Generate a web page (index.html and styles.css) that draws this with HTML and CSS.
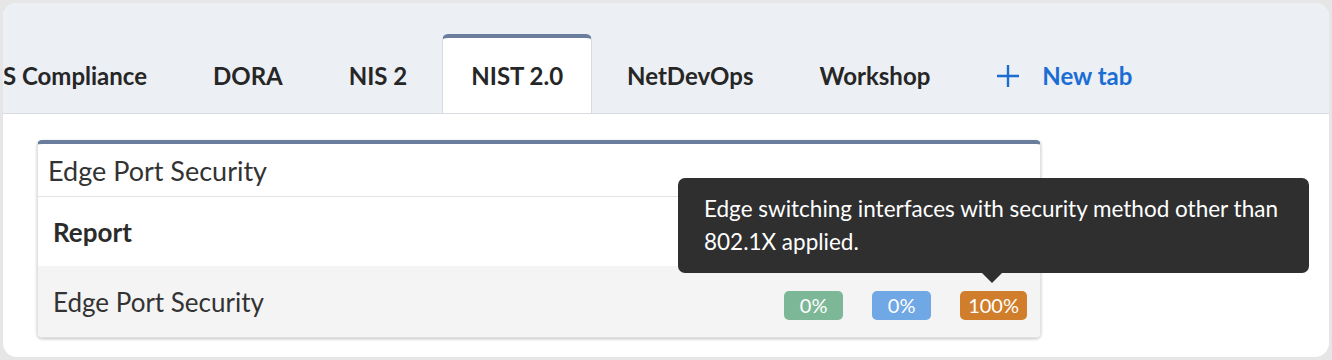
FILE: index.html
```html
<!DOCTYPE html>
<html lang="en">
<head>
  <meta charset="UTF-8" />
  <title>NIST 2.0</title>
  <link rel="stylesheet" href="styles.css">
</head>
<body>

  <div class="frame">
    <!-- Tab bar -->
    <nav class="tabbar">
      <div class="tab tab-first"><span>PCI DSS Compliance</span></div>
      <div class="tab">DORA</div>
      <div class="tab">NIS 2</div>
      <div class="tab active">NIST 2.0</div>
      <div class="tab">NetDevOps</div>
      <div class="tab">Workshop</div>
      <div class="tab new-tab">
        <svg width="24" height="24" viewBox="0 0 24 24"><path d="M12 1v22M1 12h22" stroke="#1a6dd3" stroke-width="2.4" fill="none"/></svg>
        <span>New tab</span>
      </div>
    </nav>

    <!-- Content -->
    <section class="content">
      <div class="card">
        <div class="card-title">Edge Port Security</div>
        <div class="card-head">Report</div>
        <div class="card-row">
          <span class="row-name">Edge Port Security</span>
          <div class="badges">
            <span class="badge green">0%</span>
            <span class="badge blue">0%</span>
            <span class="badge orange">100%</span>
          </div>
        </div>
      </div>

      <div class="tooltip">Edge switching interfaces with security method other than 802.1X applied.</div>
    </section>
  </div>

</body>
</html>
```

FILE: styles.css
```css
body {
  margin: 0;
  background-color: #e6e6e6;
  font-family: 'Lato', 'Open Sans', sans-serif;
  color: #2b2b2b;
}

.frame {
  margin: 3px;
  height: 354px;
  background: #fff;
  border-radius: 14px;
  overflow: hidden;
}

.tabbar {
  height: 110px;
  background: #eceff3;
  border-bottom: 1px solid #d8dbdf;
  display: flex;
  align-items: flex-end;
  gap: 4px;
  overflow: hidden;
}

.tab {
  height: 80px;
  margin-bottom: -1px;
  padding: 0 30px;
  display: flex;
  align-items: center;
  flex-shrink: 0;
  font-size: 24px;
  font-weight: bold;
  color: #262626;
  box-sizing: border-box;
  border: 1px solid transparent;
  border-top: 4px solid transparent;
  white-space: nowrap;
}

/* scrolled out of view on the left */
.tab-first {
  width: 175px;
  justify-content: flex-end;
  overflow: hidden;
}

.tab.active {
  background: #fff;
  border-color: #d8dbdf;
  border-top-color: #6a7d9c;
  border-bottom-color: #fff;
  border-radius: 6px 6px 0 0;
  padding: 0 28px;
}

.new-tab {
  color: #1a6dd3;
  gap: 22px;
}

.content {
  position: relative;
  padding: 26px 34px;
}

.card {
  width: 1004px;
  box-sizing: border-box;
  border: 1px solid #e2e2e2;
  border-top: 4px solid #6a7d9c;
  border-radius: 5px;
  box-shadow: 0 1px 3px rgba(0, 0, 0, 0.25);
  overflow: hidden;
}

.card-title {
  height: 52px;
  padding-left: 10px;
  display: flex;
  align-items: center;
  font-size: 27px;
  color: #333;
  border-bottom: 1px solid #e2e2e2;
}

.card-head {
  height: 69px;
  padding-left: 15px;
  display: flex;
  align-items: center;
  font-size: 26px;
  font-weight: bold;
}

.card-row {
  height: 71px;
  padding: 0 13px 0 15px;
  background: #f4f4f4;
  display: flex;
  align-items: center;
  justify-content: space-between;
  font-size: 26px;
  color: #333;
}

.badges {
  display: flex;
  gap: 29px;
  margin-top: 7px;
}

.badge {
  min-width: 59px;
  height: 29px;
  box-sizing: border-box;
  padding: 0 8px;
  border-radius: 5px;
  display: flex;
  align-items: center;
  justify-content: center;
  color: #fff;
  font-size: 20px;
}

.badge.green { background: #7cb897; }
.badge.blue { background: #70a7e5; }
.badge.orange { background: #d07e2c; }

.tooltip {
  position: absolute;
  left: 675px;
  top: 64px;
  width: 631px;
  height: 95px;
  box-sizing: border-box;
  padding: 14px 18px 15px 26px;
  background: #2f2f2f;
  border-radius: 7px;
  color: #fff;
  font-size: 22.5px;
  line-height: 33px;
}

.tooltip::after {
  content: "";
  position: absolute;
  left: 304px;
  top: 95px;
  border-left: 10px solid transparent;
  border-right: 10px solid transparent;
  border-top: 10px solid #2f2f2f;
}
```
